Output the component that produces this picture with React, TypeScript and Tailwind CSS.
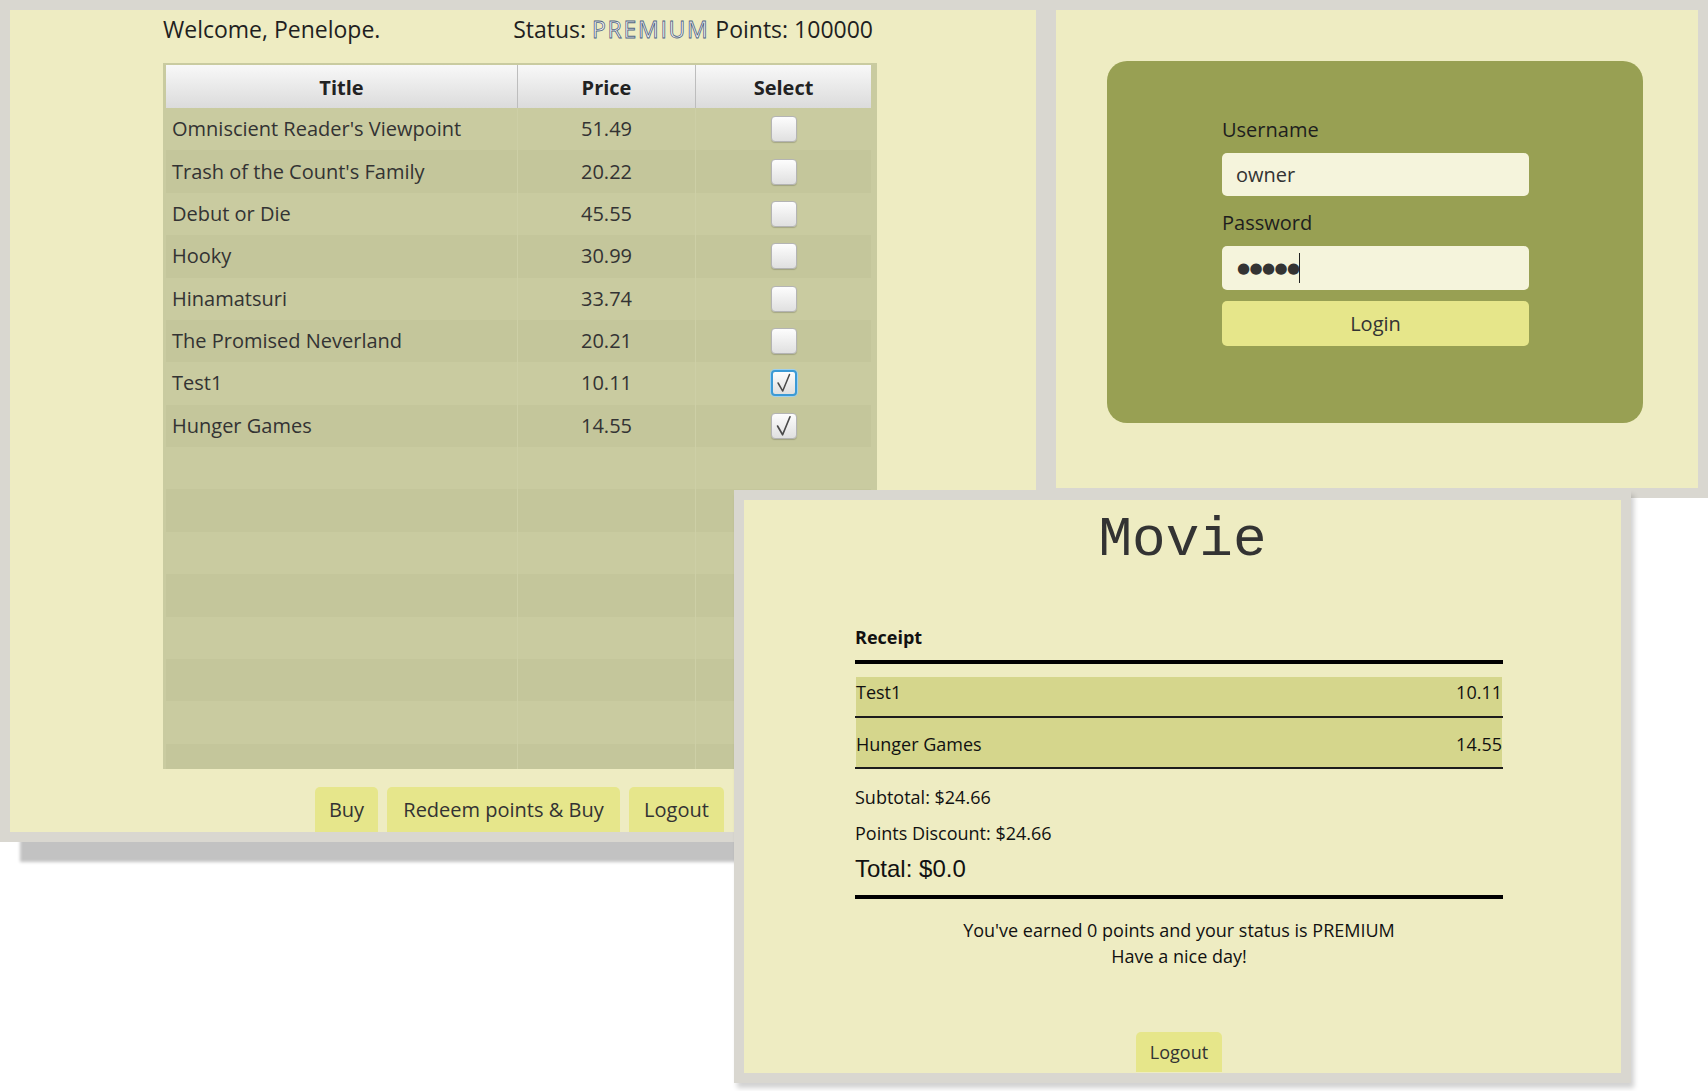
import React from "react";

type Book = { title: string; price: string; checked?: boolean; focused?: boolean };

const books: Book[] = [
  { title: "Omniscient Reader's Viewpoint", price: "51.49" },
  { title: "Trash of the Count's Family", price: "20.22" },
  { title: "Debut or Die", price: "45.55" },
  { title: "Hooky", price: "30.99" },
  { title: "Hinamatsuri", price: "33.74" },
  { title: "The Promised Neverland", price: "20.21" },
  { title: "Test1", price: "10.11", checked: true, focused: true },
  { title: "Hunger Games", price: "14.55", checked: true },
];

const emptyRows = Array.from({ length: 8 });

function CheckBox({ checked, focused }: { checked?: boolean; focused?: boolean }) {
  return (
    <div
      className={
        focused
          ? "w-[26px] h-[26px] rounded-[4px] border-2 border-[#3b9ad6] bg-linear-to-b from-[#fdfdfd] to-[#e0e0e0] shadow-[0_0_0_1px_#9fd0ee] flex items-center justify-center"
          : "w-[26px] h-[26px] rounded-[4px] border border-[#b4b4b4] bg-linear-to-b from-[#fdfdfd] to-[#e0e0e0] shadow-[0_1px_1px_rgba(0,0,0,0.18)] flex items-center justify-center"
      }
    >
      {checked && (
        <svg width="24" height="24" viewBox="0 0 26 26" fill="none">
          <polyline points="6,13 11.5,22.5 19.5,3" stroke="#4a4a4a" strokeWidth="1.8" strokeLinejoin="round" strokeLinecap="round" />
        </svg>
      )}
    </div>
  );
}

function ShopWindow() {
  return (
    <div className="absolute left-0 top-0 w-[1046px] h-[842px] border-[10px] border-[#d9d7d0] bg-[#eeecc2] shadow-[20px_20px_3px_rgba(0,0,0,0.24)] flex flex-col">
      {/* top line */}
      <div className="ml-[153px] w-[714px] h-[53px] pr-[4px] flex justify-between text-[23px] leading-[38px] text-[#1f1f1f]">
        <span>Welcome, Penelope.</span>
        <span>
          Status:{" "}
          <span className="text-white [-webkit-text-stroke:0.8px_#4d6282] tracking-[1.7px]">PREMIUM</span> Points: 100000
        </span>
      </div>

      {/* table */}
      <div className="ml-[153px] w-[714px] h-[707px] bg-[#c9cba0] pl-[3px] pt-[2px] pr-[6px] flex flex-col overflow-hidden">
        <div className="grid grid-cols-[352px_178px_175px] h-[43px] shrink-0 text-[20px] font-bold text-[#222] leading-[45px] text-center">
          <div className="bg-linear-to-b from-[#f8f8f8] to-[#dadada] border-r border-[#bdbdbd]">Title</div>
          <div className="bg-linear-to-b from-[#f8f8f8] to-[#dadada] border-r border-[#bdbdbd]">Price</div>
          <div className="bg-linear-to-b from-[#f8f8f8] to-[#dadada]">Select</div>
        </div>
        {books.map((b, i) => (
          <div
            key={b.title}
            className={
              "grid grid-cols-[352px_178px_175px] h-[42.4px] shrink-0 text-[20px] text-[#333] " +
              (i % 2 === 0 ? "bg-[#c9cba0]" : "bg-[#c4c69b]")
            }
          >
            <div className="pl-[6px] flex items-center border-r border-[#cdcfa6]">{b.title}</div>
            <div className="flex items-center justify-center border-r border-[#cdcfa6]">{b.price}</div>
            <div className="flex items-center justify-center">
              <CheckBox checked={b.checked} focused={b.focused} />
            </div>
          </div>
        ))}
        {emptyRows.map((_, i) => (
          <div
            key={i}
            className={
              "grid grid-cols-[352px_178px_175px] h-[42.4px] shrink-0 " +
              (i % 2 === 0 ? "bg-[#c9cba0]" : "bg-[#c4c69b]")
            }
          >
            <div className="border-r border-[#cdcfa6]" />
            <div className="border-r border-[#cdcfa6]" />
            <div />
          </div>
        ))}
      </div>

      {/* actions */}
      <div className="mt-[18px] pr-[7px] flex justify-center gap-[9px] h-[45px] text-[20px] text-[#333] leading-[45px] text-center">
        <button className="w-[63px] rounded-t-[5px] bg-[#e6e68b]">Buy</button>
        <button className="w-[233px] rounded-t-[5px] bg-[#e6e68b]">Redeem points &amp; Buy</button>
        <button className="w-[95px] rounded-t-[5px] bg-[#e6e68b]">Logout</button>
      </div>
    </div>
  );
}

function LoginWindow() {
  return (
    <div className="absolute left-[1046px] top-0 w-[662px] h-[498px] border-[10px] border-[#d9d7d0] bg-[#eeecc2]">
      <div className="ml-[51px] mt-[51px] w-[536px] h-[362px] rounded-[20px] bg-[#98a053] pl-[115px] pt-[55px]">
        <div className="w-[307px] flex flex-col text-[20px]">
          <div className="h-[28px] leading-[28px] text-[#1e1e1e]">Username</div>
          <div className="mt-[9px] h-[43px] rounded-[5px] bg-[#f5f4dc] pl-[14px] leading-[43px] text-[#333]">owner</div>
          <div className="mt-[13px] h-[28px] leading-[28px] text-[#1e1e1e]">Password</div>
          <div className="mt-[9px] h-[44px] rounded-[5px] bg-[#f5f4dc] pl-[15px] flex items-center text-[#333]">
            <span className="font-['DejaVu_Sans',sans-serif] text-[15px] tracking-[-0.6px]">●●●●●</span>
            <span className="w-[1px] h-[30px] bg-[#222]" />
          </div>
          <button className="mt-[11px] h-[45px] rounded-[5px] bg-[#e6e68a] text-center leading-[45px] text-[#333]">Login</button>
        </div>
      </div>
    </div>
  );
}

function ReceiptWindow() {
  return (
    <div className="absolute left-[734px] top-[490px] w-[897px] h-[593px] border-[10px] border-[#d9d7d0] bg-[#eeecc2] shadow-[3px_5px_5px_rgba(0,0,0,0.18)] flex flex-col">
      <div className="pt-[12px] text-center font-['Liberation_Mono',monospace] text-[56px] leading-[56px] text-[#333]">Movie</div>

      <div className="ml-[111px] w-[648px] flex flex-col text-[18px] text-[#111]">
        <div className="mt-[57px] h-[24px] leading-[24px] font-bold">Receipt</div>
        <div className="mt-[11px] h-[4px] bg-black" />

        <div className="mt-[13px] ml-[1px] w-[646px] h-[39px] bg-[#d5d68c] flex justify-between leading-[30px]">
          <span>Test1</span>
          <span>10.11</span>
        </div>
        <div className="h-[2px] bg-[#1c1c1c]" />
        <div className="ml-[1px] w-[646px] h-[49px] bg-[#d5d68c] pt-[11px] flex justify-between leading-[30px]">
          <span>Hunger Games</span>
          <span>14.55</span>
        </div>
        <div className="h-[2px] bg-[#1c1c1c]" />

        <div className="mt-[16px] h-[24px] leading-[24px]">Subtotal: $24.66</div>
        <div className="mt-[12px] h-[24px] leading-[24px]">Points Discount: $24.66</div>
        <div className="mt-[9px] h-[30px] leading-[30px] font-['Liberation_Sans',Arial,sans-serif] text-[24px]">Total: $0.0</div>
        <div className="mt-[11px] h-[4px] bg-black" />

        <div className="mt-[18px] text-center leading-[26px]">
          <div>You've earned 0 points and your status is PREMIUM</div>
          <div>Have a nice day!</div>
        </div>

        <button className="mt-[63px] mx-auto w-[86px] h-[40px] rounded-t-[5px] bg-[#e6e68a] text-center leading-[40px] text-[#333]">
          Logout
        </button>
      </div>
    </div>
  );
}

export default function App() {
  return (
    <div className="relative w-[1708px] h-[1091px] bg-white overflow-hidden font-['Open_Sans',sans-serif]">
      <ShopWindow />
      <LoginWindow />
      <ReceiptWindow />
    </div>
  );
}
